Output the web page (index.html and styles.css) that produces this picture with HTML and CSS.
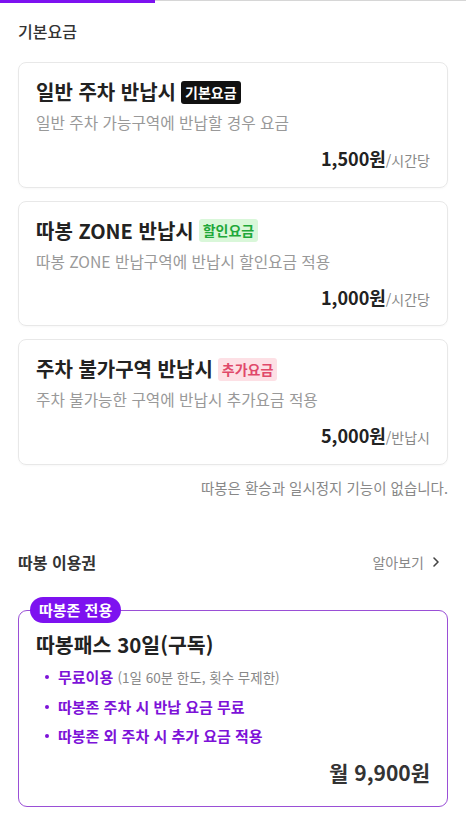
FILE: index.html
```html
<!DOCTYPE html>
<html lang="ko">
<head>
<meta charset="utf-8">
<link rel="stylesheet" href="styles.css">
</head>
<body>
<div class="progress"><div class="progress-fill"></div></div>
<main class="page">
  <h2 class="section-title">기본요금</h2>
  <div class="card">
    <div class="card-title">일반 주차 반납시 <span class="tag tag-black">기본요금</span></div>
    <div class="card-desc">일반 주차 가능구역에 반납할 경우 요금</div>
    <div class="card-price"><b>1,500원</b><span>/시간당</span></div>
  </div>
  <div class="card">
    <div class="card-title">따봉 ZONE 반납시 <span class="tag tag-green">할인요금</span></div>
    <div class="card-desc">따봉 ZONE 반납구역에 반납시 할인요금 적용</div>
    <div class="card-price"><b>1,000원</b><span>/시간당</span></div>
  </div>
  <div class="card">
    <div class="card-title">주차 불가구역 반납시 <span class="tag tag-pink">추가요금</span></div>
    <div class="card-desc">주차 불가능한 구역에 반납시 추가요금 적용</div>
    <div class="card-price"><b>5,000원</b><span>/반납시</span></div>
  </div>
  <p class="note">따봉은 환승과 일시정지 기능이 없습니다.</p>

  <div class="pass-head">
    <h2 class="section-title bold">따봉 이용권</h2>
    <span class="more">알아보기
      <svg width="12" height="12" viewBox="0 0 12 12"><path d="M4 2l4 4-4 4" fill="none" stroke="#444" stroke-width="1.6" stroke-linecap="round" stroke-linejoin="round"/></svg>
    </span>
  </div>
  <div class="pass">
    <span class="pass-badge">따봉존 전용</span>
    <div class="pass-title">따봉패스 30일(구독)</div>
    <ul class="pass-list">
      <li><b>무료이용</b> <span class="small">(1일 60분 한도, 횟수 무제한)</span></li>
      <li><b>따봉존 주차 시 반납 요금 무료</b></li>
      <li><b>따봉존 외 주차 시 추가 요금 적용</b></li>
    </ul>
    <div class="pass-price">월 9,900원</div>
  </div>
</main>
</body>
</html>
```
FILE: styles.css
```css
* { box-sizing: border-box; }
html, body { margin: 0; padding: 0; background: #fff; }
body {
  font-family: "Noto Sans CJK KR", "Noto Sans", sans-serif;
  color: #222;
  width: 466px;
  height: 822px;
  overflow: hidden;
}
.progress { height: 3px; background: #fff; position: relative; }
.progress::after { content: ""; display: block; height: 1px; background: #d6d6d6; }
.progress-fill { width: 155px; height: 3px; background: #7d12f0; position: absolute; left: 0; top: 0; }
.page { padding: 0 18px; }
.section-title {
  margin: 0;
  font-size: 16px;
  font-weight: 500;
  color: #333;
  line-height: 24px;
  padding-top: 16px;
  padding-bottom: 19px;
}
.card {
  border: 1px solid #e8e8e8;
  border-radius: 8px;
  padding: 13px 17px 12.5px 17px;
  margin-bottom: 13px;
  box-shadow: 0 1px 2px rgba(0,0,0,0.03);
}
.card-title {
  font-size: 20px;
  font-weight: 700;
  color: #222;
  line-height: 32px;
  display: flex;
  align-items: center;
  gap: 5px;
}
.tag {
  font-size: 14px;
  font-weight: 700;
  line-height: 23px;
  padding: 0 4px;
  border-radius: 3px;
}
.tag-black { background: #111; color: #fff; }
.tag-green { background: #d9f7d9; color: #1fa83a; }
.tag-pink { background: #fde0e5; color: #e0496a; }
.card-desc {
  font-size: 15.7px;
  color: #999;
  line-height: 24px;
  margin-top: 3px;
}
.card-price {
  text-align: right;
  margin-top: 9px;
  line-height: 28px;
}
.card-price b { font-size: 18px; font-weight: 700; color: #222; }
.card-price span { font-size: 14px; color: #888; }
.note {
  margin: 10px 0 0;
  text-align: right;
  font-size: 14.5px;
  color: #888;
  line-height: 20px;
}
.pass-head {
  display: flex;
  justify-content: space-between;
  align-items: center;
  margin-top: 52px;
}
.pass-head .section-title { padding: 0; font-size: 16px; font-weight: 700; }
.more { font-size: 14px; color: #888; display: flex; align-items: center; gap: 6px; padding-right: 6px; }
.pass {
  position: relative;
  margin-top: 36px;
  border: 1.5px solid #9a4fd6;
  border-radius: 9px;
  padding: 17px 17px 18px 17px;
}
.pass-badge {
  position: absolute;
  left: 11px;
  top: -14px;
  background: #7d12f0;
  color: #fff;
  font-size: 15px;
  font-weight: 700;
  line-height: 26px;
  padding: 0 9px;
  border-radius: 13px;
}
.pass-title {
  font-size: 20.5px;
  font-weight: 700;
  color: #222;
  line-height: 32px;
}
.pass-list {
  list-style: none;
  margin: 2px 0 0;
  padding: 0 0 0 8px;
}
.pass-list li {
  font-size: 15px;
  line-height: 29px;
  color: #7d12d8;
  position: relative;
  padding-left: 14px;
}
.pass-list li::before {
  content: "";
  position: absolute;
  left: 1px;
  top: 13px;
  width: 4px;
  height: 4px;
  border-radius: 50%;
  background: #7d12d8;
}
.pass-list b { font-weight: 700; }
.pass-list .small { font-size: 13.5px; color: #888; }
.pass-price {
  text-align: right;
  font-size: 21px;
  font-weight: 700;
  color: #333;
  margin-top: 6px;
  line-height: 32px;
}
```
